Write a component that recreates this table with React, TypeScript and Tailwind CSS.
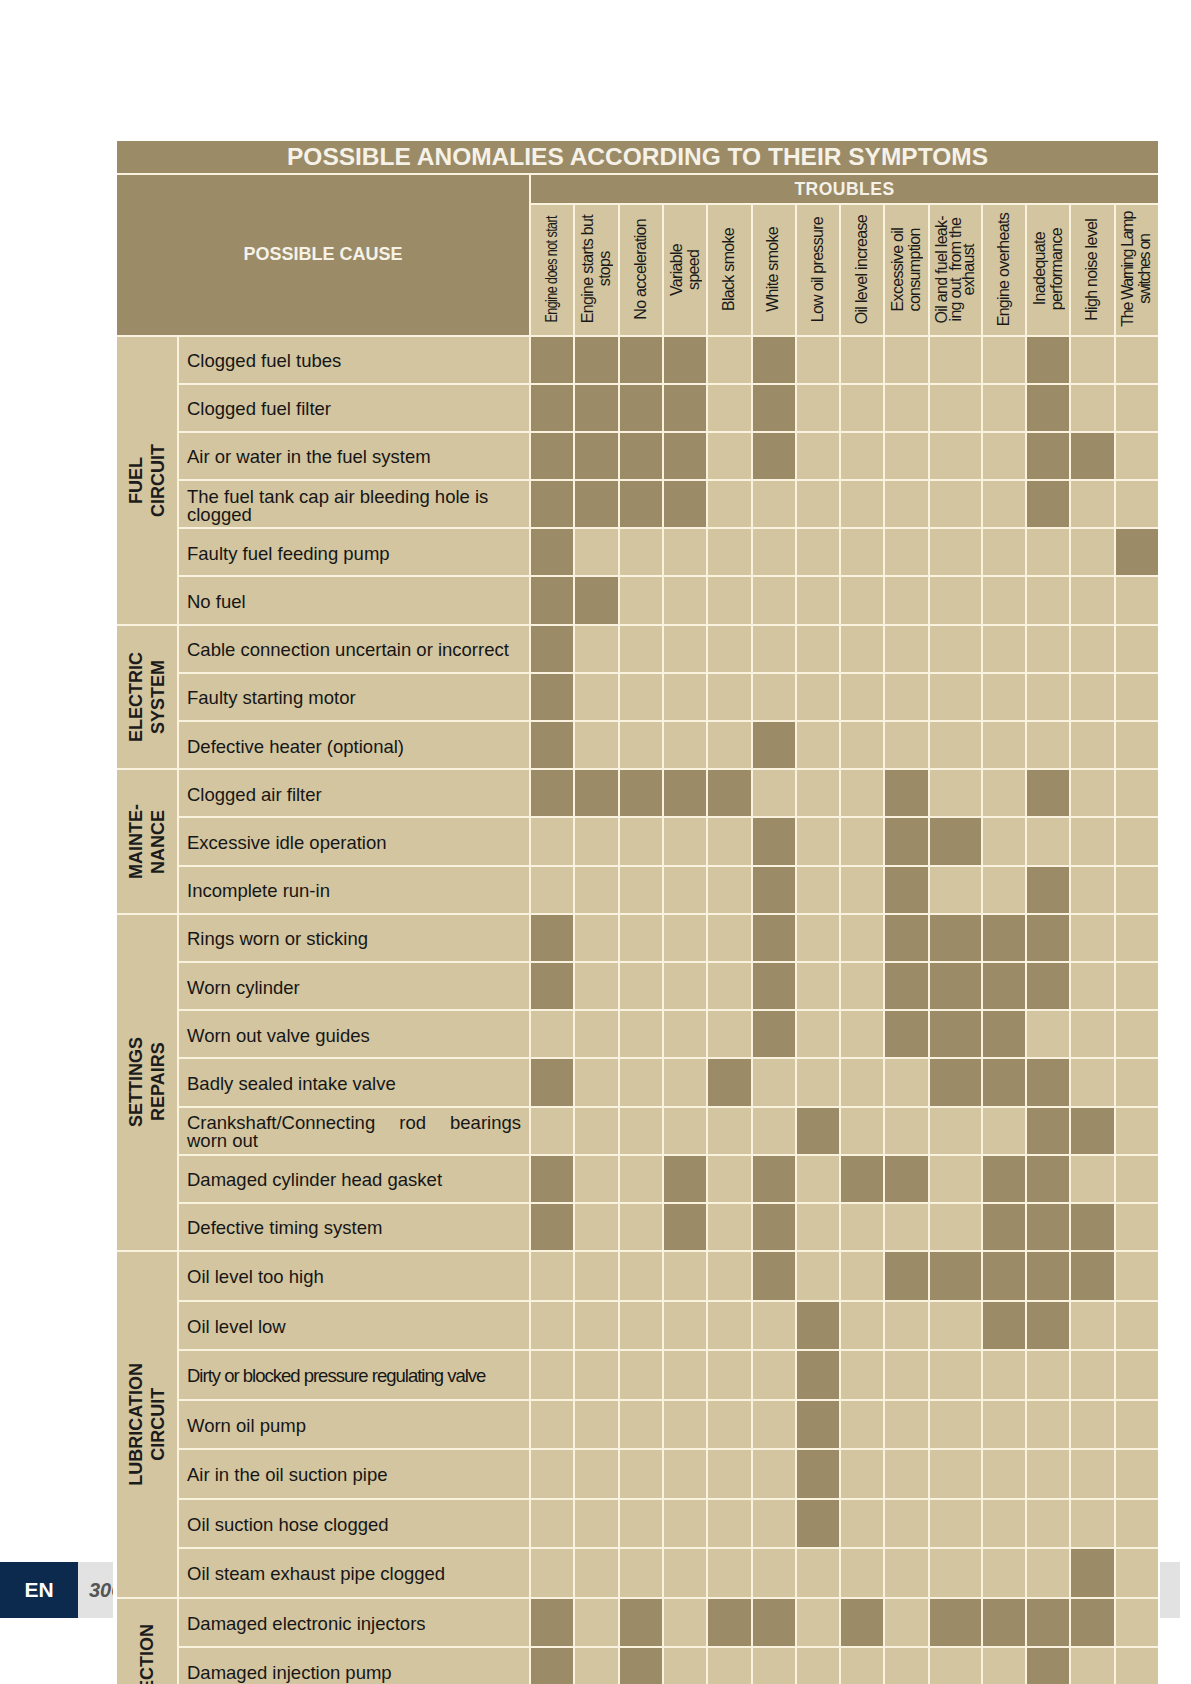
import React from 'react'

type Cause = { text: string; marks: number[]; tight?: boolean; justify?: boolean }
type Group = { label: string[]; span: string; causes: Cause[] }

const troubles = [
  { lines: ['Engine does not start'], squeeze: true },
  { lines: ['Engine starts but', 'stops'] },
  { lines: ['No acceleration'] },
  { lines: ['Variable', 'speed'] },
  { lines: ['Black smoke'] },
  { lines: ['White smoke'] },
  { lines: ['Low oil pressure'] },
  { lines: ['Oil level increase'] },
  { lines: ['Excessive oil', 'consumption'] },
  { lines: ['Oil and fuel leak-', 'ing out  from the', 'exhaust'], dense: true },
  { lines: ['Engine overheats'] },
  { lines: ['Inadequate', 'performance'] },
  { lines: ['High noise level'] },
  { lines: ['The Warning Lamp', 'switches on'], tight: true },
]

const groups: Group[] = [
  {
    label: ['FUEL', 'CIRCUIT'],
    span: 'row-span-6',
    causes: [
      { text: 'Clogged fuel tubes', marks: [1, 2, 3, 4, 6, 12] },
      { text: 'Clogged fuel filter', marks: [1, 2, 3, 4, 6, 12] },
      { text: 'Air or water in the fuel system', marks: [1, 2, 3, 4, 6, 12, 13] },
      { text: 'The fuel tank cap air bleeding hole is clogged', marks: [1, 2, 3, 4, 12] },
      { text: 'Faulty fuel feeding pump', marks: [1, 14] },
      { text: 'No fuel', marks: [1, 2] },
    ],
  },
  {
    label: ['ELECTRIC', 'SYSTEM'],
    span: 'row-span-3',
    causes: [
      { text: 'Cable connection uncertain or incorrect', marks: [1] },
      { text: 'Faulty starting motor', marks: [1] },
      { text: 'Defective heater (optional)', marks: [1, 6] },
    ],
  },
  {
    label: ['MAINTE-', 'NANCE'],
    span: 'row-span-3',
    causes: [
      { text: 'Clogged air filter', marks: [1, 2, 3, 4, 5, 9, 12] },
      { text: 'Excessive idle operation', marks: [6, 9, 10] },
      { text: 'Incomplete run-in', marks: [6, 9, 12] },
    ],
  },
  {
    label: ['SETTINGS', 'REPAIRS'],
    span: 'row-span-7',
    causes: [
      { text: 'Rings worn or sticking', marks: [1, 6, 9, 10, 11, 12] },
      { text: 'Worn cylinder', marks: [1, 6, 9, 10, 11, 12] },
      { text: 'Worn out valve guides', marks: [6, 9, 10, 11] },
      { text: 'Badly sealed intake valve', marks: [1, 5, 10, 11, 12] },
      { text: 'Crankshaft/Connecting rod bearings worn out', marks: [7, 12, 13], justify: true },
      { text: 'Damaged cylinder head gasket', marks: [1, 4, 6, 8, 9, 11, 12] },
      { text: 'Defective timing system', marks: [1, 4, 6, 11, 12, 13] },
    ],
  },
  {
    label: ['LUBRICATION', 'CIRCUIT'],
    span: 'row-span-7',
    causes: [
      { text: 'Oil level too high', marks: [6, 9, 10, 11, 12, 13] },
      { text: 'Oil level low', marks: [7, 11, 12] },
      { text: 'Dirty or blocked pressure regulating valve', marks: [7], tight: true },
      { text: 'Worn oil pump', marks: [7] },
      { text: 'Air in the oil suction pipe', marks: [7] },
      { text: 'Oil suction hose clogged', marks: [7] },
      { text: 'Oil steam exhaust pipe clogged', marks: [13] },
    ],
  },
  {
    label: ['INJECTION'],
    span: 'row-span-3',
    causes: [
      { text: 'Damaged electronic injectors', marks: [1, 3, 5, 6, 8, 10, 11, 12, 13] },
      { text: 'Damaged injection pump', marks: [1, 3, 12] },
      { text: '', marks: [] },
    ],
  },
]

const cols = Array.from({ length: 14 }, (_, i) => i + 1)

export default function App() {
  return (
    <div className="relative w-[1191px] h-[1684px] overflow-hidden bg-white font-['Liberation_Sans',Arial,sans-serif]">
      <div className="pt-[141px] pl-[117px]">
        <div className="grid w-[1041px] gap-[2px] bg-[#f8f2de] grid-cols-[60px_350px_repeat(9,minmax(0,1fr))_51px_repeat(4,minmax(0,1fr))] grid-rows-[32px_27.5px_130px_repeat(19,46.2px)_repeat(10,47.5px)]">
          {/* title */}
          <div className="col-span-16 flex items-center justify-center bg-[#9b8b67] text-[24.5px] font-bold text-[#f6f2e8]">
            POSSIBLE ANOMALIES ACCORDING TO THEIR SYMPTOMS
          </div>

          <div className="col-span-2 row-span-2 flex items-center justify-center bg-[#9b8b67] text-[18px] font-bold text-[#f6f2e8]">
            POSSIBLE CAUSE
          </div>
          <div className="col-span-14 flex items-center justify-center bg-[#9b8b67] text-[17.5px] font-bold tracking-[0.5px] text-[#f6f2e8]">
            TROUBLES
          </div>

          {troubles.map((t, idx) => (
            <div key={idx} className="flex items-center justify-center bg-[#d3c59f] text-[#1a1a1a]">
              <div
                className={
                  '[writing-mode:vertical-rl] rotate-180 text-center text-[16px] ' +
                  (t.tight ? 'tracking-[-1.3px] ' : 'tracking-[-0.7px] ') +
                  (t.dense ? 'leading-[13.5px] ' : 'leading-[16.5px] ') +
                  (t.squeeze ? 'scale-y-[0.78] ' : '')
                }
              >
                {t.lines.map((l, i) => (
                  <div key={i} className="whitespace-pre">
                    {l}
                  </div>
                ))}
              </div>
            </div>
          ))}

          {groups.map((g, gi) => (
            <React.Fragment key={gi}>
              <div className={g.span + ' flex items-center justify-center bg-[#d3c59f] text-[#1c1c1c]'}>
                <div className="[writing-mode:vertical-rl] rotate-180 text-center text-[18px] font-bold leading-[22px]">
                  {g.label.map((l, i) => (
                    <div key={i}>{l}</div>
                  ))}
                </div>
              </div>
              {g.causes.map((c, ci) => (
                <React.Fragment key={ci}>
                  <div className="flex items-center bg-[#d3c59f] pl-[8px] pr-[8px] pt-[3px] text-[#161616]">
                    <div
                      className={
                        'w-full text-[18.5px] leading-[18px] ' +
                        (c.tight ? 'tracking-[-1px] ' : '') +
                        (c.justify ? 'text-justify' : '')
                      }
                    >
                      {c.text}
                    </div>
                  </div>
                  {cols.map((n) => (
                    <div
                      key={n}
                      className={c.marks.includes(n) ? 'bg-[#9b8b67]' : 'bg-[#d3c59f]'}
                    />
                  ))}
                </React.Fragment>
              ))}
            </React.Fragment>
          ))}
        </div>
      </div>

      {/* page footer tabs */}
      <div className="absolute left-0 top-[1562px] flex h-[56px] w-[78px] items-center justify-center bg-[#0c2a4e] text-[21px] font-bold text-white">
        EN
      </div>
      <div className="absolute left-[78px] top-[1562px] flex h-[56px] w-[35px] items-center overflow-hidden bg-[#e2e2e2] pl-[11px] text-[20px] font-bold italic text-[#555555]">
        306
      </div>
      <div className="absolute left-[1160px] top-[1562px] h-[56px] w-[20px] bg-[#e2e2e2]" />
    </div>
  )
}
